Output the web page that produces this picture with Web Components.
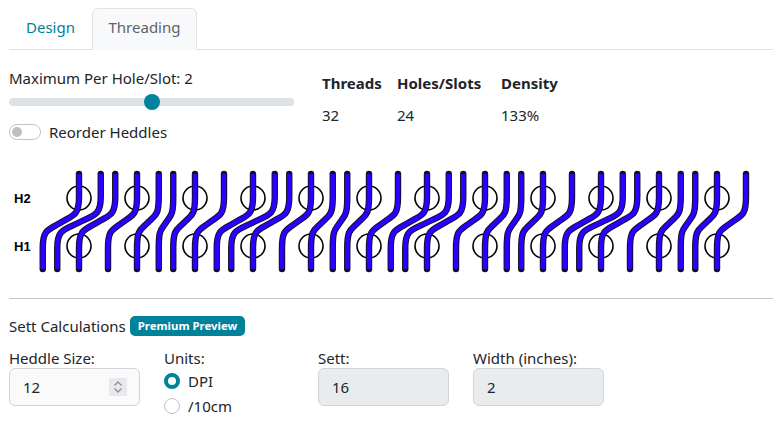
<!DOCTYPE html>
<html>
<head>
<meta charset="utf-8">
<style>
  html, body { margin: 0; background: #fff; }
  body { font-family: "Noto Sans", "Open Sans", sans-serif; color: #212529; font-size: 15px; }
  .page { display: block; padding: 8px 0 0 9px; width: 764px; }
</style>
</head>
<body>
<div class="page">
  <tab-bar></tab-bar>
  <threading-controls></threading-controls>
  <threading-draft></threading-draft>
  <sett-calculations></sett-calculations>
</div>
<script>
class TabBar extends HTMLElement{
  constructor(){
    super();
    this.attachShadow({ mode : "open"});
  }
  connectedCallback(){
    this.shadowRoot.innerHTML = `
    <style>
      :host{ display: flex; height: 41px; border-bottom: 1px solid #dee2e6; padding-left: 0; }
      .tab{ box-sizing: border-box; height: 42px; display: flex; align-items: center; justify-content: center; border: 1px solid transparent; border-radius: 6px 6px 0 0; line-height: 1; padding-bottom: 3px; }
      .link{ width: 83px; color: #00829b; }
      .active{ width: 105px; color: #5c636a; background: #f8f9fa; border-color: #dee2e6 #dee2e6 #f8f9fa; }
    </style>
    <div class="tab link">Design</div>
    <div class="tab active">Threading</div>
    `
  }
}
customElements.define("tab-bar", TabBar)

class RangeSlider extends HTMLElement{
  constructor(){
    super();
    this.attachShadow({ mode : "open"});
  }
  connectedCallback(){
    this.shadowRoot.innerHTML = `
    <style>
      :host{ display: block; position: relative; width: 285px; height: 8px; background: #dee2e6; border-radius: 4px; }
      .thumb{ position: absolute; left: 135px; top: -4px; width: 16px; height: 16px; border-radius: 50%; background: #00829b; }
    </style>
    <div class="thumb"></div>
    `
  }
}
customElements.define("range-slider", RangeSlider)

class ToggleSwitch extends HTMLElement{
  constructor(){
    super();
    this.attachShadow({ mode : "open"});
  }
  connectedCallback(){
    this.shadowRoot.innerHTML = `
    <style>
      :host{ display: flex; align-items: center; gap: 8px; }
      .track{ box-sizing: border-box; width: 32px; height: 16px; border: 1px solid #bfc3c8; border-radius: 8px; padding: 2px; background: #fff; }
      .knob{ width: 10px; height: 10px; border-radius: 50%; background: #bfbfbf; }
    </style>
    <div class="track"><div class="knob"></div></div>
    <slot></slot>
    `
  }
}
customElements.define("toggle-switch", ToggleSwitch)

class ThreadingControls extends HTMLElement{
  constructor(){
    super();
    this.attachShadow({ mode : "open"});
  }
  connectedCallback(){
    this.shadowRoot.innerHTML = `
    <style>
      :host{ display: flex; height: 105px; }
      .left{ width: 313px; padding-top: 18px; box-sizing: border-box; }
      .label{ height: 30px; line-height: 20px; }
      .left toggle-switch{ margin-top: 18px; line-height: 16px; }
      .stats{ display: grid; grid-template-columns: 75px 104px auto; grid-template-rows: 32px 32px; padding-top: 17px; line-height: 32px; }
      .stats b{ font-weight: 700; }
    </style>
    <div class="left">
      <div class="label">Maximum Per Hole/Slot: 2</div>
      <range-slider></range-slider>
      <toggle-switch>Reorder Heddles</toggle-switch>
    </div>
    <div class="stats">
      <b>Threads</b><b>Holes/Slots</b><b>Density</b>
      <span>32</span><span>24</span><span>133%</span>
    </div>
    `
  }
}
customElements.define("threading-controls", ThreadingControls)

class ThreadingDraft extends HTMLElement{
  static get tops(){
    return [79,100.75,115.25,137,158.75,173.25,195,224,253,274.75,289.25,311,332.75,347.25,369,398,427,448.75,463.25,485,506.75,521.25,543,572,601,622.75,637.25,659,680.75,695.25,717,746]
  }
  static get bottoms(){
    return [42.75,57.25,79,108,137,158.75,173.25,195,216.75,231.25,253,282,311,332.75,347.25,369,390.75,405.25,427,456,485,506.75,521.25,543,564.75,579.25,601,630,659,680.75,695.25,717]
  }
  constructor(){
    super();
    this.attachShadow({ mode : "open"});
  }
  connectedCallback(){
    let circles = ""
    for(let x = 79; x <= 717; x += 58){
      circles += `<circle cx="${x}" cy="198" r="12"/><circle cx="${x}" cy="246" r="12"/>`
    }
    const tops = ThreadingDraft.tops
    const paths = ThreadingDraft.bottoms.map((b, i) => {
      const t = tops[i]
      const dx = t - b
      const mx = b + dx / 2
      return `M${b} 269V248C${b} 229 ${mx - dx * .34} 230 ${mx} 222.500S${t} 216 ${t} 197V174`
    })
    const lines = paths.map(d => `<path class="edge" d="${d}"/><path class="fill" d="${d}"/>`).join("")
    this.shadowRoot.innerHTML = `
    <style>
      :host{ display: block; height: 144px; margin-left: -9px; }
      svg{ display: block; }
      circle{ fill: none; stroke: #000; stroke-width: 1.6; }
      text{ font: bold 13px "Liberation Sans", sans-serif; fill: #000; }
      path{ fill: none; stroke-linecap: round; }
      .edge{ stroke: #111; stroke-width: 6.4; }
      .fill{ stroke: #2a00ff; stroke-width: 4.6; stroke-linecap: butt; }
      .rule{ height: 1px; margin-left: 9px; background: #c6c6c6; }
    </style>
    <svg width="773" height="143" viewBox="0 155 773 143">
      <text x="14" y="203">H2</text>
      <text x="14" y="251">H1</text>
      ${circles}
      ${lines}
    </svg>
    <div class="rule"></div>
    `
  }
}
customElements.define("threading-draft", ThreadingDraft)

class FieldBox extends HTMLElement{
  constructor(){
    super();
    this.attachShadow({ mode : "open"});
  }
  connectedCallback(){
    const disabled = this.hasAttribute("disabled")
    const spin = this.hasAttribute("spin")
    this.shadowRoot.innerHTML = `
    <style>
      :host{ display: block; width: 131px; }
      .label{ height: 20px; line-height: 20px; }
      .box{ box-sizing: border-box; height: 38px; border: 1px solid #ced4da; border-radius: 6px; background: ${disabled ? "#e9ecef" : "#fafafa"}; display: flex; align-items: center; justify-content: space-between; padding: 0 12px 0 13px; }
      .spin{ width: 18px; height: 18px; background: #e9e9ed; display: block; }
      svg{ display: block; }
    </style>
    <div class="label">${this.getAttribute("label")}</div>
    <div class="box"><span><slot></slot></span>${spin ? `<svg class="spin" viewBox="0 0 18 18"><path d="M5.5 7.5 9 4l3.500 3.500M5.500 10.500 9 14l3.500-3.500" fill="none" stroke="#8d8d95" stroke-width="1.300"/></svg>` : ""}</div>
    `
  }
}
customElements.define("field-box", FieldBox)

class RadioOption extends HTMLElement{
  constructor(){
    super();
    this.attachShadow({ mode : "open"});
  }
  connectedCallback(){
    const on = this.hasAttribute("checked")
    this.shadowRoot.innerHTML = `
    <style>
      :host{ display: flex; align-items: center; gap: 8px; height: 25px; }
      .dot{ box-sizing: border-box; width: 16px; height: 16px; border-radius: 50%; background: #fff; border: ${on ? "4.500px solid #00829b" : "1px solid #bfc3c8"}; }
    </style>
    <div class="dot"></div>
    <slot></slot>
    `
  }
}
customElements.define("radio-option", RadioOption)

class SettCalculations extends HTMLElement{
  constructor(){
    super();
    this.attachShadow({ mode : "open"});
  }
  connectedCallback(){
    this.shadowRoot.innerHTML = `
    <style>
      :host{ display: block; }
      .head{ display: flex; align-items: center; gap: 4px; height: 20px; margin-top: 17px; }
      .badge{ background: #00829b; color: #fff; font-size: 11.4px; font-weight: 700; border-radius: 5px; height: 20px; line-height: 20px; padding: 0 8px; }
      .row{ display: flex; margin-top: 12px; }
      .units{ width: 154px; margin-left: 24px; }
      .units .label{ height: 20px; line-height: 20px; }
      field-box + field-box{ margin-left: 24px; }
    </style>
    <div class="head">Sett Calculations <span class="badge">Premium Preview</span></div>
    <div class="row">
      <field-box label="Heddle Size:" spin>12</field-box>
      <div class="units">
        <div class="label">Units:</div>
        <radio-option checked>DPI</radio-option>
        <radio-option>/10cm</radio-option>
      </div>
      <field-box label="Sett:" disabled>16</field-box>
      <field-box label="Width (inches):" disabled>2</field-box>
    </div>
    `
  }
}
customElements.define("sett-calculations", SettCalculations)
</script>
</body>
</html>
